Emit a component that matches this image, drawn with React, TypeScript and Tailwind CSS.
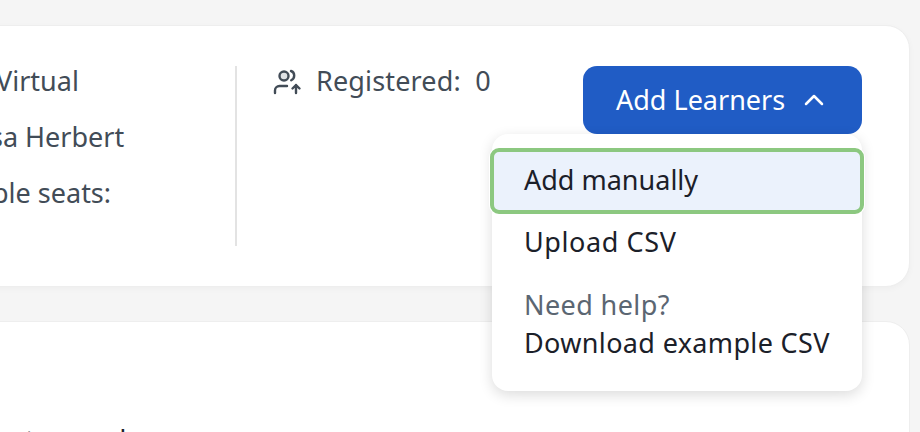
const font = "font-['Noto_Sans','Lato',sans-serif]";

const UserUpIcon = () => (
  <svg className="mt-[3px] shrink-0" width="30" height="30" viewBox="0 0 30 30" fill="none" stroke="#424c57" strokeWidth="2.400" strokeLinecap="round" strokeLinejoin="round">
    <circle cx="11" cy="10" r="4.500" fill="#dfe2e5" />
    <path d="M2 27v-2.500c0-2.500 2-4.500 4.500-4.500h7.500" />
    <path d="M18 5c2 .6 3.200 2.400 3.200 4.500 0 2-1 3.800-3 4.800" />
    <path d="M23 27v-8M19.500 22.500L23 19l3.500 3.500" />
  </svg>
);

export default function App() {
  return (
    <div className={`w-[920px] h-[432px] overflow-hidden bg-[#f5f5f5] pt-[25px] ${font}`}>
      <div className="relative -ml-[30px] w-[940px] h-[262px] bg-white border border-[#eeeeee] rounded-[24px] shadow-[0_2px_6px_rgba(0,0,0,0.03)] pt-[40px] flex">
        <div className="w-[266px] h-[180px] border-r-2 border-[#e3e3e3] text-[27px] leading-[36px] text-[#424c57] flex flex-col gap-[20px]">
          <span className="-mt-[3px] ml-[25px]">Virtual</span>
          <span className="ml-[19px]">sa Herbert</span>
          <span className="ml-[21px]">ble seats:</span>
        </div>
        <div className="ml-[36px] -mt-[3px] flex items-start gap-[13px] w-[310px] text-[27px] leading-[36px] text-[#424c57]">
          <UserUpIcon />
          <span className="whitespace-pre tracking-[0.15px]">Registered:  0</span>
        </div>
        <button className="w-[279px] h-[68px] rounded-[14px] bg-[#205cc5] text-white text-[27px] flex items-center pl-[33px] gap-[17px]">
          Add Learners
          <svg width="24" height="24" viewBox="0 0 24 24" fill="none" stroke="white" strokeWidth="2.500" strokeLinecap="round" strokeLinejoin="round">
            <path d="M4 16l8-8 8 8" />
          </svg>
        </button>

        <div className="absolute left-[521px] top-[108px] w-[370px] h-[257px] bg-white rounded-[16px] shadow-[0_4px_14px_rgba(0,0,0,0.14)] pt-[14px] text-[27px] text-[#1b2029]">
          <div className="-mx-[2px] h-[66px] bg-[#ebf2fc] border-[4px] border-[#8cc880] rounded-[9px] shadow-[0_0_0_1px_white] flex items-center pl-[30px] pb-[2px]">
            Add manually
          </div>
          <div className="pl-[32px] mt-[10px] leading-[36px] tracking-[0.6px]">Upload CSV</div>
          <div className="pl-[32px] mt-[27px] leading-[36px] tracking-[0.4px] text-[#5b6672]">Need help?</div>
          <div className="pl-[32px] leading-[40px] tracking-[0.35px] whitespace-nowrap">Download example CSV</div>
        </div>
      </div>
      <div className="-ml-[30px] mt-[34px] w-[940px] h-[300px] bg-white border border-[#eeeeee] rounded-[24px] pt-[100px] pl-[54px] flex gap-[75px] text-[27px] leading-[36px] text-[#1b2029]">
        <span>t</span>
        <span>d</span>
      </div>
    </div>
  );
}
